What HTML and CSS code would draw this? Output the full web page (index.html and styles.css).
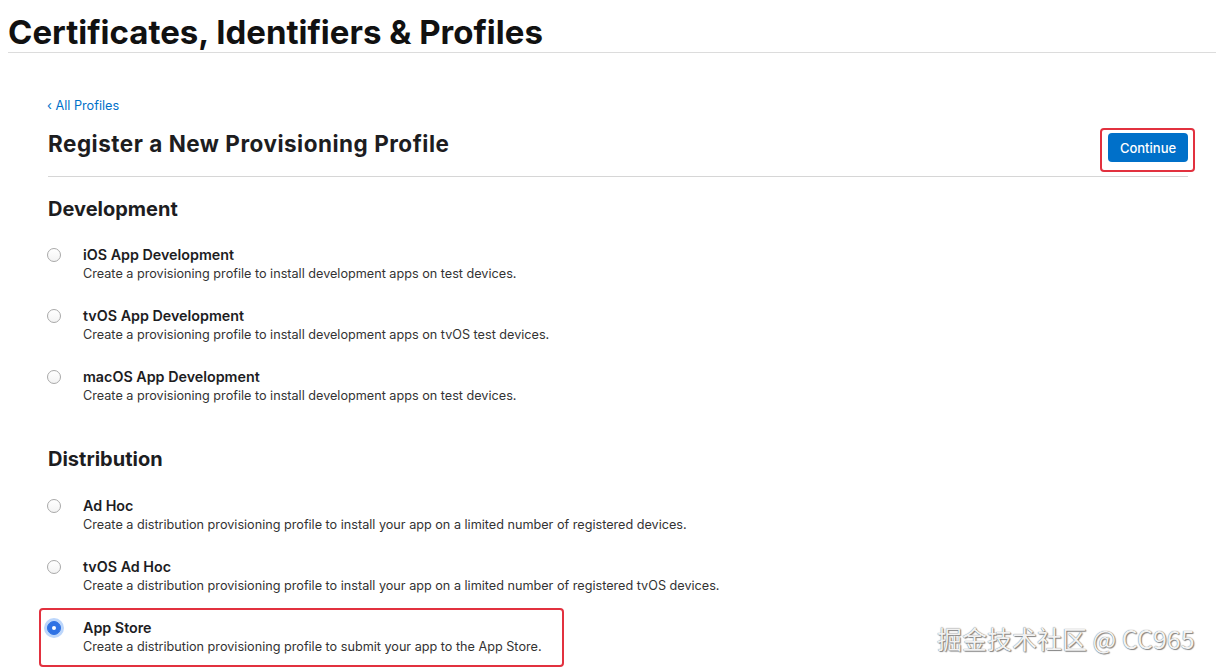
FILE: index.html
```html
<!DOCTYPE html>
<html lang="en">
<head>
<meta charset="utf-8">
<title>Register a New Provisioning Profile</title>
<link rel="stylesheet" href="styles.css">
</head>
<body>
<header class="page-header">
  <h1 class="page-title">Certificates, Identifiers &amp; Profiles</h1>
</header>
<main class="content">
  <a class="back-link" href="#">&#8249; All Profiles</a>
  <div class="title-row">
    <h2 class="form-title">Register a New Provisioning Profile</h2>
    <button class="btn-continue" type="button">Continue</button>
  </div>

  <section class="group">
    <h3 class="group-title">Development</h3>
    <ul class="options">
      <li class="option">
        <span class="radio"></span>
        <div class="option-text">
          <div class="option-name">iOS App Development</div>
          <div class="option-desc">Create a provisioning profile to install development apps on test devices.</div>
        </div>
      </li>
      <li class="option">
        <span class="radio"></span>
        <div class="option-text">
          <div class="option-name">tvOS App Development</div>
          <div class="option-desc">Create a provisioning profile to install development apps on tvOS test devices.</div>
        </div>
      </li>
      <li class="option">
        <span class="radio"></span>
        <div class="option-text">
          <div class="option-name">macOS App Development</div>
          <div class="option-desc">Create a provisioning profile to install development apps on test devices.</div>
        </div>
      </li>
    </ul>
  </section>

  <section class="group group-dist">
    <h3 class="group-title">Distribution</h3>
    <ul class="options">
      <li class="option">
        <span class="radio"></span>
        <div class="option-text">
          <div class="option-name">Ad Hoc</div>
          <div class="option-desc">Create a distribution provisioning profile to install your app on a limited number of registered devices.</div>
        </div>
      </li>
      <li class="option">
        <span class="radio"></span>
        <div class="option-text">
          <div class="option-name">tvOS Ad Hoc</div>
          <div class="option-desc">Create a distribution provisioning profile to install your app on a limited number of registered tvOS devices.</div>
        </div>
      </li>
      <li class="option option-marked">
        <span class="radio radio-checked"></span>
        <div class="option-text">
          <div class="option-name">App Store</div>
          <div class="option-desc">Create a distribution provisioning profile to submit your app to the App Store.</div>
        </div>
      </li>
    </ul>
  </section>
</main>
<div class="watermark">掘金技术社区 @ CC965</div>
</body>
</html>
```

FILE: styles.css
```css
* { box-sizing: border-box; }

html, body {
  margin: 0;
  padding: 0;
  background: #fff;
}

body {
  font-family: Inter, "Liberation Sans", "Noto Sans CJK SC", sans-serif;
  color: #1d1d1f;
  width: 1216px;
  height: 672px;
  overflow: hidden;
  position: relative;
}

.page-header {
  margin-left: 8px;
  padding-top: 13px;
  padding-bottom: 1px;
  border-bottom: 1px solid #dcdcdc;
}

.page-title {
  margin: 0;
  font-size: 33px;
  line-height: 38px;
  font-weight: 700;
  color: #111;
}

.content {
  margin: 0 28px 0 48px;
  padding-top: 44px;
}

.back-link {
  display: block;
  margin-left: -1px;
  font-size: 12.7px;
  line-height: 18px;
  color: #0070c9;
  text-decoration: none;
}

.title-row {
  display: flex;
  justify-content: space-between;
  align-items: flex-start;
  margin-top: 15px;
  padding-bottom: 14px;
  border-bottom: 1px solid #d6d6d6;
}

.form-title {
  margin: 0;
  font-size: 22.5px;
  line-height: 28px;
  font-weight: 700;
  letter-spacing: 0.5px;
  color: #1d1d1f;
}

.btn-continue {
  position: relative;
  margin-top: 3px;
  width: 80px;
  height: 29px;
  border: none;
  border-radius: 4px;
  background: #0070c9;
  color: #fff;
  font-family: inherit;
  font-size: 13px;
  font-weight: 500;
  padding: 0;
}

.btn-continue::after {
  content: "";
  position: absolute;
  left: -8px;
  top: -5px;
  right: -7px;
  bottom: -10px;
  border: 2px solid #e2313f;
  border-radius: 4px;
}

.group {
  margin-top: 19px;
}

.group-dist {
  margin-top: 41px;
}

.group-title {
  margin: 0;
  font-size: 20px;
  line-height: 26px;
  font-weight: 700;
  color: #1d1d1f;
}

.options {
  list-style: none;
  margin: 23px 0 0;
  padding: 0;
  display: flex;
  flex-direction: column;
  gap: 23px;
}

.group-dist .options {
  margin-top: 24px;
}

.option {
  display: flex;
  align-items: flex-start;
  gap: 22px;
  position: relative;
}

.radio {
  flex: none;
  width: 14px;
  height: 14px;
  margin-top: 3px;
  margin-left: -1px;
  border: 1px solid #a9a9a9;
  border-radius: 50%;
  background: linear-gradient(#fff, #f3f3f3);
  position: relative;
}

.radio-checked {
  border-color: #2f72e4;
  background: #2f72e4;
  box-shadow: 0 0 0 3px #bcd6fb;
}

.radio-checked::after {
  content: "";
  position: absolute;
  left: 4px;
  top: 4px;
  width: 4px;
  height: 4px;
  border-radius: 50%;
  background: #fff;
}

.option-name {
  font-size: 14.3px;
  line-height: 20px;
  font-weight: 600;
  color: #1d1d1f;
}

.option-desc {
  font-size: 12.65px;
  line-height: 18px;
  color: #333;
}

.option-marked::after {
  content: "";
  position: absolute;
  left: -9px;
  top: -10px;
  width: 521px;
  height: 55px;
  border: 2px solid #e2313f;
  border-radius: 4px;
}

.watermark {
  position: absolute;
  left: 937px;
  top: 623px;
  font-family: "Noto Sans CJK SC", "Liberation Sans", sans-serif;
  font-size: 25px;
  line-height: 30px;
  color: #f2f2f2;
  text-shadow: 0 0 1px #555, 1px 1px 1px #888;
  white-space: nowrap;
}
```
